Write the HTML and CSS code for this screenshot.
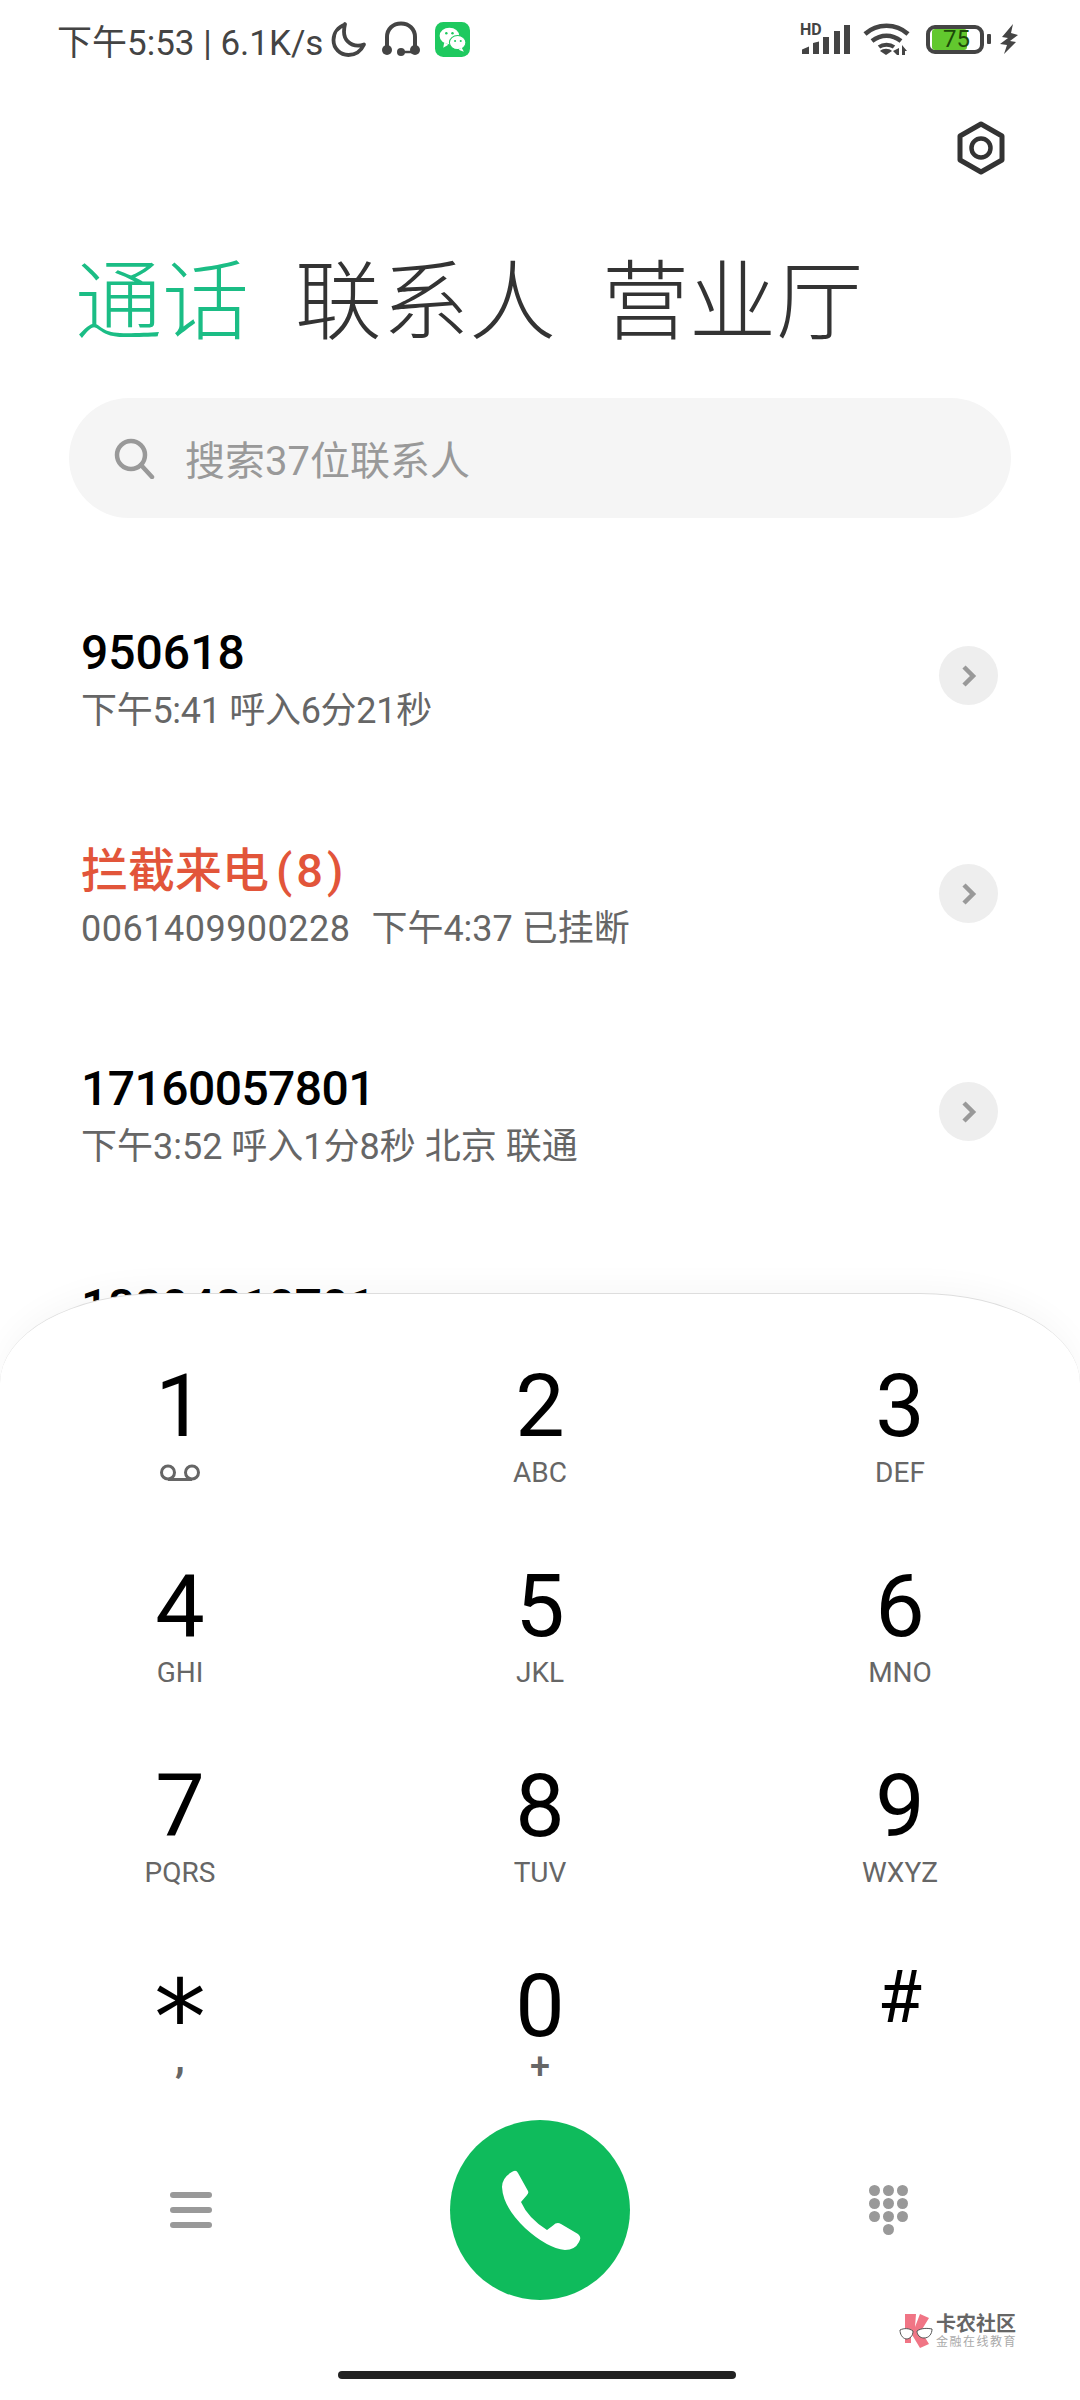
FILE: index.html
```html
<!DOCTYPE html>
<html lang="zh-CN">
<head>
    <meta charset="UTF-8">
    <meta name="viewport" content="width=device-width, initial-scale=1.0">
    <title>通话</title>
    <link rel="stylesheet" href="styles.css">
</head>
<body>
<div class="phone">
    <div class="status-bar">
        <div class="status-left">
            <span class="status-text">下午5:53 | 6.1K/s</span>
            <svg class="ico-moon" width="36" height="37" viewBox="0 0 36 36"><path d="M14 3C7 5.500 2.500 11.500 2.500 18.500c0 8.500 6.500 15 15 15 7 0 12.500-4 15.500-10.500-2 .8-4 1.200-6 1.200-8 0-14-6-14-14 0-2.500.3-4.700 1-7.700z" fill="none" stroke="#444" stroke-width="3.800" stroke-linejoin="round"/></svg>
            <svg class="ico-headset" width="38" height="36" viewBox="0 0 38 36"><path d="M5 28V16C5 8 11 2.500 19 2.500S33 8 33 16v12" fill="none" stroke="#444" stroke-width="4"/><circle cx="5" cy="29" r="5" fill="#444"/><circle cx="33" cy="29" r="5" fill="#444"/><circle cx="19" cy="31" r="4" fill="#444"/><path d="M19 31h14" stroke="#444" stroke-width="2.500"/></svg>
            <svg class="ico-wechat" width="35" height="35" viewBox="0 0 34 34"><rect width="34" height="34" rx="8" fill="#1ec95f"/><ellipse cx="14" cy="13.500" rx="9.500" ry="8" fill="#fff"/><path d="M9 20l-1 5 5-3z" fill="#fff"/><ellipse cx="22" cy="20" rx="8" ry="6.800" fill="#fff" stroke="#1ec95f"/><path d="M26 25l2 4-5-2z" fill="#fff"/><circle cx="11" cy="11" r="1.200" fill="#1ec95f"/><circle cx="17" cy="11" r="1.200" fill="#1ec95f"/><circle cx="19.500" cy="18.500" r="1" fill="#1ec95f"/><circle cx="25" cy="18.500" r="1" fill="#1ec95f"/></svg>
        </div>
        <div class="status-right">
            <div class="signal">
                <span class="hd">HD</span>
                <svg width="48" height="32" viewBox="0 0 48 32"><path d="M0 31v-4.500l7-3V31zM11 31V20l6-1.500V31zM21 31V14h6v17zM32 31V8h6v23zM42 31V2h6v29z" fill="#444"/></svg>
            </div>
            <svg class="ico-wifi" width="47" height="33" viewBox="0 0 47 33"><path d="M2 11C14 0 33 0 45 11" fill="none" stroke="#444" stroke-width="4.500"/><path d="M9 18c9-7 20-7 29 0" fill="none" stroke="#444" stroke-width="4.500"/><path d="M16 24c4-3 11-3 15 0" fill="none" stroke="#444" stroke-width="4"/><path d="M23 32l-6-4c3-3 9-3 12 0z" fill="#444"/><path d="M36 25v7h-2l-4-4zM39 32v-10l5 6h-2v4z" fill="#444"/></svg>
            <div class="battery">
                <div class="battery-body">
                    <div class="battery-fill"></div>
                    <span class="battery-num">75</span>
                </div>
                <div class="battery-cap"></div>
            </div>
            <svg class="ico-bolt" width="18" height="30" viewBox="0 0 18 30"><path d="M13 0L2 13l6 1-8 6 7 1-3 9 12-12-6-1 8-6-7-2z" fill="#444"/></svg>
        </div>
    </div>

    <div class="settings-row">
        <svg width="52" height="54" viewBox="0 0 52 54"><path d="M26 3l21 12v24L26 51 5 39V15z" fill="none" stroke="#333" stroke-width="5" stroke-linejoin="round"/><circle cx="26" cy="27" r="9.500" fill="none" stroke="#333" stroke-width="4.500"/></svg>
    </div>

    <div class="tabs">
        <span class="tab active">通话</span>
        <span class="tab">联系人</span>
        <span class="tab">营业厅</span>
    </div>

    <div class="search">
        <svg width="42" height="42" viewBox="0 0 42 42"><circle cx="18" cy="18" r="14" fill="none" stroke="#999" stroke-width="4.500"/><path d="M28 28l11 12" stroke="#999" stroke-width="4.500" stroke-linecap="round"/></svg>
        <span class="search-text">搜索37位联系人</span>
    </div>

    <div class="call-list">
        <div class="call-row">
            <div class="call-info">
                <div class="call-name">950618</div>
                <div class="call-detail tight">下午5:41 呼入6分21秒</div>
            </div>
            <div class="arrow"><svg width="18" height="24" viewBox="0 0 18 24"><path d="M4 3l9 9-9 9" fill="none" stroke="#999" stroke-width="4.500"/></svg></div>
        </div>
        <div class="call-row">
            <div class="call-info">
                <div class="call-name blocked">拦截来电<span class="paren">(8)</span></div>
                <div class="call-detail"><span class="num">0061409900228</span>&nbsp; 下午4:37 已挂断</div>
            </div>
            <div class="arrow"><svg width="18" height="24" viewBox="0 0 18 24"><path d="M4 3l9 9-9 9" fill="none" stroke="#999" stroke-width="4.500"/></svg></div>
        </div>
        <div class="call-row">
            <div class="call-info">
                <div class="call-name long">17160057801</div>
                <div class="call-detail">下午3:52 呼入1分8秒 北京 联通</div>
            </div>
            <div class="arrow"><svg width="18" height="24" viewBox="0 0 18 24"><path d="M4 3l9 9-9 9" fill="none" stroke="#999" stroke-width="4.500"/></svg></div>
        </div>
        <div class="call-row">
            <div class="call-info">
                <div class="call-name long">18804810701</div>
                <div class="call-detail">&nbsp;</div>
            </div>
        </div>
    </div>

    <div class="dialer">
        <div class="keypad">
            <div class="key"><span class="digit">1</span><svg class="voicemail" width="40" height="17" viewBox="0 0 40 17"><circle cx="8" cy="8.500" r="6.500" fill="none" stroke="#666" stroke-width="3"/><circle cx="32" cy="8.500" r="6.500" fill="none" stroke="#666" stroke-width="3"/><path d="M8 15.500h24" stroke="#666" stroke-width="3"/></svg></div>
            <div class="key"><span class="digit">2</span><span class="letters">ABC</span></div>
            <div class="key"><span class="digit">3</span><span class="letters">DEF</span></div>
            <div class="key"><span class="digit">4</span><span class="letters">GHI</span></div>
            <div class="key"><span class="digit">5</span><span class="letters">JKL</span></div>
            <div class="key"><span class="digit">6</span><span class="letters">MNO</span></div>
            <div class="key"><span class="digit">7</span><span class="letters">PQRS</span></div>
            <div class="key"><span class="digit">8</span><span class="letters">TUV</span></div>
            <div class="key"><span class="digit">9</span><span class="letters">WXYZ</span></div>
            <div class="key"><span class="digit star">*</span><span class="letters comma">,</span></div>
            <div class="key"><span class="digit">0</span><span class="letters plus">+</span></div>
            <div class="key"><span class="digit hash">#</span></div>
        </div>
        <div class="actions">
            <div class="menu-btn"><i></i><i></i><i></i></div>
            <div class="call-btn">
                <svg width="90" height="90" viewBox="0 0 90 90"><path d="M16 7.500Q21 4 23 8L33 26Q34 28 32 30L26 37Q33 53 52 65L58 60.500Q62 56.500 66 59L83 69Q87 72 84 77Q80 85 70 85Q52 83 30 63Q8 42 7 22Q7 13 16 7.500z" fill="#fff"/></svg>
            </div>
            <div class="pad-btn">
                <i></i><i></i><i></i><i></i><i></i><i></i><i></i><i></i><i></i><i class="pad-last"></i>
            </div>
        </div>
        <div class="home-bar"></div>
        <div class="watermark">
            <svg width="34" height="36" viewBox="0 0 34 36"><path d="M6 1h11l-1 13 5-13 9 4-8 13 8 13-9 4-9-15v10H6z" fill="#f07585"/><path d="M1 17c4-2 9-2 13 1 0 5-3 8-7 8-4-1-6-5-6-9zM18 18c4-3 10-3 15-2 0 5-3 9-8 9-4 0-7-3-7-7z" fill="#fff" stroke="#555" stroke-width="1"/></svg>
            <div class="wm-text">
                <span class="wm-title">卡农社区</span>
                <span class="wm-sub">金融在线教育</span>
            </div>
        </div>
    </div>
</div>
</body>
</html>
```

FILE: styles.css
```css
* {
    box-sizing: border-box;
}
html, body {
    margin: 0;
    padding: 0;
    background: #fff;
}
body {
    font-family: Roboto, "Noto Sans CJK SC", sans-serif;
}
.phone {
    position: relative;
    width: 1080px;
    height: 2400px;
    overflow: hidden;
    background: #fff;
}

/* status bar */
.status-bar {
    height: 80px;
    padding: 20px 62px 0 57px;
    display: flex;
    justify-content: space-between;
    align-items: flex-start;
}
.status-left, .status-right {
    display: flex;
    align-items: center;
    height: 38px;
}
.status-text {
    font-size: 35px;
    color: #444;
    white-space: nowrap;
}
.ico-moon { margin-left: 8px; }
.ico-headset { margin-left: 15px; }
.ico-wechat { margin-left: 15px; }
.signal {
    position: relative;
    width: 48px;
    height: 32px;
}
.signal svg {
    display: block;
}
.hd {
    position: absolute;
    left: -2px;
    top: 0;
    font-size: 16px;
    font-weight: 700;
    color: #444;
    line-height: 14px;
}
.ico-wifi { margin-left: 13px; }
.battery {
    display: flex;
    align-items: center;
    margin-left: 16px;
}
.battery-body {
    position: relative;
    width: 58px;
    height: 29px;
    border: 4px solid #444;
    border-radius: 9px;
}
.battery-fill {
    position: absolute;
    left: 2px;
    top: 0;
    width: 35px;
    height: 100%;
    background: #62c82e;
    border-radius: 3px;
}
.battery-num {
    position: absolute;
    left: 13px;
    top: -1px;
    font-size: 24px;
    line-height: 23px;
    color: #1c4a08;
}
.battery-cap {
    width: 4px;
    height: 10px;
    margin-left: 3px;
    background: #444;
    border-radius: 1px;
}
.ico-bolt { margin-left: 9px; }

/* header */
.settings-row {
    height: 58px;
    margin-top: 41px;
    padding-right: 73px;
    display: flex;
    justify-content: flex-end;
}
.tabs {
    display: flex;
    gap: 46px;
    margin-top: 64px;
    padding-left: 75px;
    font-size: 87px;
    line-height: 120px;
    font-weight: 300;
    color: #333;
    white-space: nowrap;
}
.tab.active {
    color: #1bbd85;
}
.search {
    display: flex;
    align-items: center;
    gap: 30px;
    width: 942px;
    height: 120px;
    margin: 35px 0 0 69px;
    padding-left: 44px;
    border-radius: 60px;
    background: #f5f5f5;
}
.search-text {
    font-size: 40px;
    color: #999;
}

/* calls */
.call-list {
    margin-top: 50px;
}
.call-row {
    display: flex;
    align-items: center;
    justify-content: space-between;
    height: 218px;
    padding: 0 82px 0 81px;
}
.call-name {
    font-size: 48px;
    line-height: 68px;
    font-weight: 500;
    color: #000;
    white-space: nowrap;
}
.call-name.long {
    letter-spacing: -.55px;
}
.call-name.blocked {
    font-size: 47px;
    color: #e2553a;
}
.paren {
    margin-left: 7px;
    letter-spacing: 4px;
}
.call-detail {
    font-size: 36px;
    line-height: 48px;
    color: #666;
    white-space: nowrap;
}
.call-detail.tight {
    letter-spacing: -.3px;
}
.num {
    margin-right: 3px;
    letter-spacing: .5px;
}
.arrow {
    width: 59px;
    height: 59px;
    margin-top: -3px;
    border-radius: 50%;
    background: #eee;
    display: flex;
    align-items: center;
    justify-content: center;
}

/* dialer */
.dialer {
    position: absolute;
    left: 0;
    right: 0;
    top: 1293px;
    bottom: 0;
    background: #fff;
    border-top: 1px solid #ddd;
    border-radius: 160px 160px 0 0 / 90px 90px 0 0;
    box-shadow: 0 -8px 30px rgba(0,0,0,0.03);
}
.keypad {
    display: grid;
    grid-template-columns: repeat(3, 1fr);
    grid-template-rows: repeat(3, 200px) 166px;
    padding-top: 60px;
}
.key {
    display: flex;
    flex-direction: column;
    align-items: center;
    color: #000;
}
.digit {
    height: 102px;
    font-size: 88px;
    line-height: 104px;
}
.digit.star {
    font-family: "DejaVu Sans", sans-serif;
    font-size: 104px;
    line-height: 128px;
}
.digit.hash {
    font-size: 72px;
    line-height: 88px;
}
.letters {
    height: 30px;
    margin-top: 2px;
    font-size: 28px;
    line-height: 30px;
    color: #666;
}
.letters.comma {
    margin-top: -12px;
    font-size: 40px;
    font-weight: 700;
}
.letters.plus {
    margin-top: -4px;
    font-size: 36px;
    font-weight: 500;
}
.voicemail {
    margin-top: 8px;
}
.actions {
    display: flex;
    align-items: center;
    justify-content: center;
    position: relative;
    height: 180px;
}
.call-btn {
    width: 180px;
    height: 180px;
    border-radius: 50%;
    background: #0fbb5c;
    display: flex;
    align-items: center;
    justify-content: center;
}
.menu-btn {
    position: absolute;
    left: 170px;
    top: 72px;
    width: 42px;
    display: flex;
    flex-direction: column;
    gap: 9px;
}
.menu-btn i {
    display: block;
    height: 6px;
    border-radius: 3px;
    background: #999;
}
.pad-btn {
    position: absolute;
    left: 869px;
    top: 65px;
    display: grid;
    grid-template-columns: repeat(3, 11px);
    gap: 2px 3px;
}
.pad-btn i {
    width: 11px;
    height: 11px;
    border-radius: 50%;
    background: #999;
}
.pad-btn .pad-last {
    grid-column: 2;
}
.home-bar {
    width: 398px;
    height: 8px;
    margin: 71px 0 0 338px;
    border-radius: 4px;
    background: #222;
}
.watermark {
    position: absolute;
    left: 899px;
    top: 1019px;
    display: flex;
    align-items: center;
    gap: 3px;
}
.wm-text {
    display: flex;
    flex-direction: column;
    white-space: nowrap;
}
.wm-title {
    font-size: 20px;
    line-height: 22px;
    font-weight: 700;
    color: #666;
}
.wm-sub {
    font-size: 12px;
    line-height: 14px;
    letter-spacing: 1.500px;
    color: #aaa;
}
```
